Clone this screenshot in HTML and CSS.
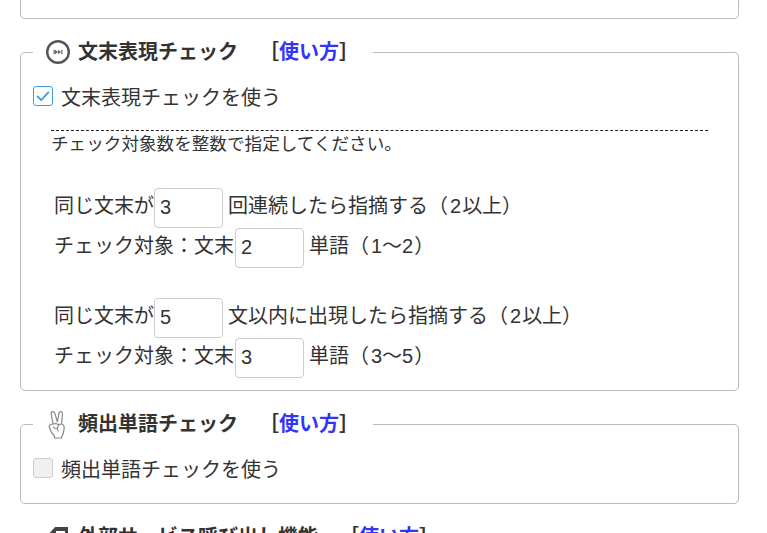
FILE: index.html
```html
<!DOCTYPE html>
<html lang="ja">
<head>
    <meta charset="UTF-8">
    <meta name="viewport" content="width=device-width, initial-scale=1.0">
    <title>チェック設定</title>
    <link rel="stylesheet" href="styles.css">
</head>
<body>
    <div class="box box-cut"></div>

    <fieldset class="box">
        <legend>
            <svg class="icon" viewBox="0 0 24 24" xmlns="http://www.w3.org/2000/svg">
                <circle cx="12" cy="12" r="10.8" fill="none" stroke="#555" stroke-width="2.4"/>
                <rect x="7.6" y="9.8" width="1.2" height="4.4" fill="#666"/>
                <path d="M9 9.8 L12 12 L9 14.2 Z M12 9.8 L15 12 L12 14.2 Z" fill="#666"/>
                <rect x="15.2" y="9.8" width="1.2" height="4.4" fill="#666"/>
            </svg>
            <span>文末表現チェック</span>
            <span class="howto">［<a href="#">使い方</a>］</span>
        </legend>
        <label class="use"><span class="check on"><svg viewBox="0 0 20 20" xmlns="http://www.w3.org/2000/svg"><path d="M3.5 10 L8 14.5 L16.5 5.5" fill="none" stroke="#3d9ae0" stroke-width="2"/></svg></span>文末表現チェックを使う</label>
        <div class="detail">
            <p class="note">チェック対象数を整数で指定してください。</p>
            <div class="group">
                <div class="row">同じ文末が<input type="text" value="3"><span class="after">回連続したら指摘する（<span class="num">2</span>以上）</span></div>
                <div class="row target">チェック対象：文末<input type="text" value="2"><span class="after">単語（<span class="num">1～2</span>）</span></div>
            </div>
            <div class="group">
                <div class="row">同じ文末が<input type="text" value="5"><span class="after">文以内に出現したら指摘する（<span class="num">2</span>以上）</span></div>
                <div class="row target">チェック対象：文末<input type="text" value="3"><span class="after">単語（<span class="num">3～5</span>）</span></div>
            </div>
        </div>
    </fieldset>

    <fieldset class="box">
        <legend>
            <svg class="icon icon-tall" viewBox="0 0 24 30" xmlns="http://www.w3.org/2000/svg">
                <path d="M7 15 L5.2 5 Q5 2.8 6.8 2.6 Q8.4 2.5 8.9 4.4 L11.4 13 L13 4 Q13.5 2.4 15 2.6 Q16.6 2.9 16.4 4.8 L15.6 15 Q18.4 16 18.2 19 L17.6 23 Q17 25.5 15.8 27 L15.6 29 H8.6 L8.2 26.5 Q5 24 4 20 L3.2 17.5 Q3 15.4 7 15 Z" fill="#fff" stroke="#888" stroke-width="1.2"/>
                <path d="M7 15 Q10.5 14 12.8 16 L11 19.6 Q8 19.6 6.8 17.4 M15.6 15 Q13.4 15 12.8 16 M11 19.6 L12.4 22.6" fill="none" stroke="#888" stroke-width="1.1"/>
            </svg>
            <span>頻出単語チェック</span>
            <span class="howto">［<a href="#">使い方</a>］</span>
        </legend>
        <label class="use"><span class="check"></span>頻出単語チェックを使う</label>
    </fieldset>

    <fieldset class="box">
        <legend>
            <svg class="icon" viewBox="0 0 24 24" xmlns="http://www.w3.org/2000/svg">
                <path d="M1 11 L9 2 H22 V23 H1 Z" fill="#444"/>
                <rect x="10" y="6" width="9" height="14" fill="#fff"/>
                <rect x="12" y="9" width="5" height="1.6" fill="#444"/>
            </svg>
            <span>外部サービス呼び出し機能</span>
            <span class="howto">［<a href="#">使い方</a>］</span>
        </legend>
    </fieldset>
</body>
</html>
```

FILE: styles.css
```css
html, body {
    height: 533px;
    overflow: hidden;
}

body {
    margin: 0;
    padding: 0 28px 0 20px;
    background-color: #fff;
    color: #333;
    font-family: "Liberation Sans", "Noto Sans CJK JP", sans-serif;
    font-size: 20px;
}

.box {
    display: block;
    margin: 0 0 20px;
    padding: 0 0 21px 12px;
    border: 1px solid #bbb;
    border-radius: 5px;
    min-width: 0;
}

.box-cut {
    height: 18px;
    padding: 0;
    margin-bottom: 20px;
    border-top: none;
    border-radius: 0 0 5px 5px;
}

legend {
    display: flex;
    align-items: center;
    height: 26px;
    margin-left: 0;
    padding: 0 14px 0 13px;
    font-weight: bold;
    line-height: 26px;
}

.icon {
    width: 24px;
    height: 24px;
    margin-right: 8px;
    flex-shrink: 0;
}

.icon-tall {
    height: 30px;
}

.howto {
    margin-left: 21px;
}

.howto a {
    color: #3333ff;
    text-decoration: none;
}

.use {
    display: flex;
    align-items: center;
    height: 28px;
    margin-top: 17px;
}

.check {
    display: block;
    width: 20px;
    height: 20px;
    margin-right: 8px;
    box-sizing: border-box;
    background: #f0f0f0;
    border: 1px solid #ccc;
    border-radius: 3px;
}

.check.on {
    background: #fff;
    border-color: #3d9ae0;
}

.check svg {
    display: block;
    width: 18px;
    height: 18px;
}

.detail {
    margin: 20px 30px 0 18px;
    border-top: 1px dashed #222;
}

.note {
    margin: 0 0 31px;
    font-size: 17.6px;
    line-height: 26px;
}

.group {
    margin-bottom: 30px;
    padding-left: 3px;
}

.group:last-child {
    margin-bottom: -9px;
}

.row {
    display: flex;
    align-items: flex-start;
    height: 40px;
    line-height: 36px;
}

.row input {
    width: 69px;
    height: 40px;
    box-sizing: border-box;
    padding: 0 5px 2px;
    border: 1px solid #ccc;
    border-radius: 4px;
    color: #333;
    font-family: inherit;
    font-size: 20px;
}

.target input {
    margin-left: 1px;
}

.after {
    margin-left: 5px;
}

.num {
    margin: 0 1px 0 2px;
}
```
